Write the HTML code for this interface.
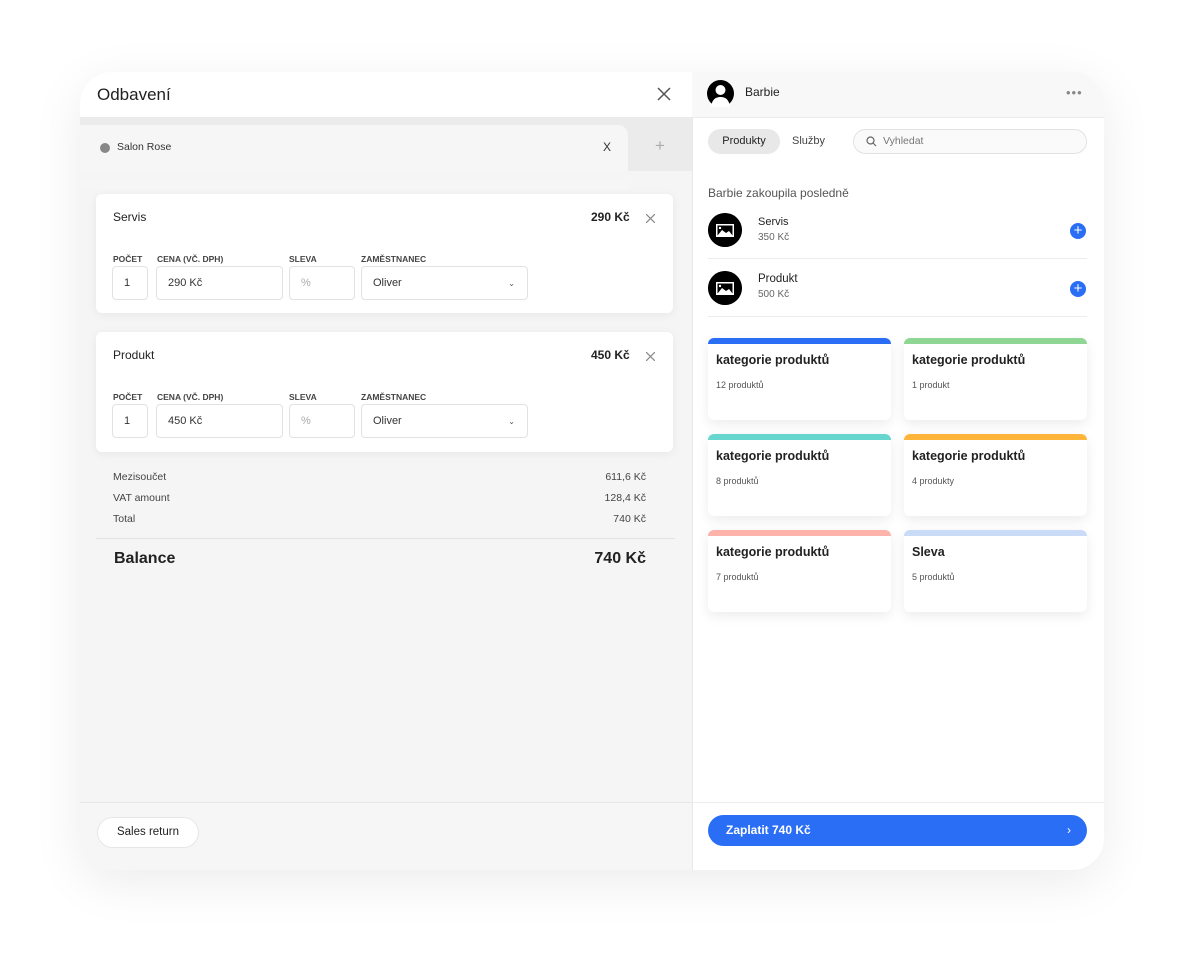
<!DOCTYPE html>
<html><head><meta charset="utf-8"><style>
*{box-sizing:border-box;margin:0;padding:0}
body{width:1184px;height:958px;background:#fff;font-family:"Liberation Sans",sans-serif;color:#222;position:relative;overflow:hidden}
.a{position:absolute}
.frame{left:80px;top:72px;width:1024px;height:798px;border-radius:32px;overflow:hidden;background:#f5f5f5;box-shadow:0 12px 50px rgba(0,0,0,.08)}
.card{background:#fff;border-radius:6px;box-shadow:0 2px 10px rgba(0,0,0,.06)}
.lbl{font-size:8.5px;font-weight:bold;color:#444}
.inp{background:#fff;border:1px solid #e2e2e2;border-radius:4px;font-size:11px;color:#333;display:flex;align-items:center;padding-left:11px}
.cat{background:#fff;border-radius:6px;box-shadow:0 4px 12px rgba(0,0,0,.08);overflow:hidden;width:183px;height:82px}
.cat .bar{height:6px}
.cat b{display:block;font-size:12.5px;margin:9px 0 0 8px;color:#222}
.cat span{display:block;font-size:9px;color:#555;margin:13px 0 0 8px}
.plus{width:16px;height:16px;border-radius:50%;background:#2a6ef5;color:#fff;font-size:15px;line-height:15px;text-align:center}
.ic{width:34px;height:34px;border-radius:50%;background:#000}
</style></head><body>
<div class="a frame">
  <div class="a" style="left:0;top:0;width:612px;height:45px;background:#fff"></div>
  <div class="a" style="left:17px;top:13px;font-size:17px;color:#222">Odbavení</div>
  <svg class="a" style="left:577px;top:15px" width="14" height="14"><path d="M1 1L13 13M13 1L1 13" stroke="#555" stroke-width="1.5"/></svg>
  <div class="a" style="left:0;top:45px;width:612px;height:54px;background:#ebebeb"></div>
  <div class="a" style="left:0;top:53px;width:548px;height:60px;background:#f6f6f6;border-radius:0 10px 0 0"></div>
  <div class="a" style="left:20px;top:71px;width:10px;height:10px;border-radius:50%;background:#888"></div>
  <div class="a" style="left:37px;top:69px;font-size:10.5px;color:#333">Salon Rose</div>
  <div class="a" style="left:523px;top:68px;font-size:12px;color:#333">X</div>
  <div class="a" style="left:575px;top:64px;font-size:17px;color:#aaa">+</div>
  <div class="a" style="left:0;top:99px;width:612px;height:631px;background:#f5f5f5"></div>
  <div class="a" style="left:0;top:108px;width:548px;height:10px;background:#f6f6f6"></div>

  <div class="a card" style="left:16px;top:122px;width:577px;height:119px"></div>
  <div class="a" style="left:33px;top:138px;font-size:12px;color:#222">Servis</div>
  <div class="a" style="left:511px;top:138px;font-size:12px;font-weight:bold">290 Kč</div>
  <svg class="a" style="left:566px;top:142px" width="9" height="9"><path d="M0 0L9 9M9 0L0 9" stroke="#888" stroke-width="1.2"/></svg>
  <div class="a lbl" style="left:33px;top:182px">POČET</div>
  <div class="a lbl" style="left:77px;top:182px">CENA (VČ. DPH)</div>
  <div class="a lbl" style="left:209px;top:182px">SLEVA</div>
  <div class="a lbl" style="left:281px;top:182px">ZAMĚSTNANEC</div>
  <div class="a inp" style="left:32px;top:194px;width:36px;height:34px">1</div>
  <div class="a inp" style="left:76px;top:194px;width:127px;height:34px">290 Kč</div>
  <div class="a inp" style="left:209px;top:194px;width:66px;height:34px;color:#aaa">%</div>
  <div class="a inp" style="left:281px;top:194px;width:167px;height:34px">Oliver<span style="position:absolute;right:12px;font-size:8px;color:#555">⌄</span></div>

  <div class="a card" style="left:16px;top:260px;width:577px;height:120px"></div>
  <div class="a" style="left:33px;top:276px;font-size:12px;color:#222">Produkt</div>
  <div class="a" style="left:511px;top:276px;font-size:12px;font-weight:bold">450 Kč</div>
  <svg class="a" style="left:566px;top:280px" width="9" height="9"><path d="M0 0L9 9M9 0L0 9" stroke="#888" stroke-width="1.2"/></svg>
  <div class="a lbl" style="left:33px;top:320px">POČET</div>
  <div class="a lbl" style="left:77px;top:320px">CENA (VČ. DPH)</div>
  <div class="a lbl" style="left:209px;top:320px">SLEVA</div>
  <div class="a lbl" style="left:281px;top:320px">ZAMĚSTNANEC</div>
  <div class="a inp" style="left:32px;top:332px;width:36px;height:34px">1</div>
  <div class="a inp" style="left:76px;top:332px;width:127px;height:34px">450 Kč</div>
  <div class="a inp" style="left:209px;top:332px;width:66px;height:34px;color:#aaa">%</div>
  <div class="a inp" style="left:281px;top:332px;width:167px;height:34px">Oliver<span style="position:absolute;right:12px;font-size:8px;color:#555">⌄</span></div>

  <div class="a" style="left:33px;top:399px;font-size:10.5px;color:#444">Mezisoučet</div>
  <div class="a" style="left:33px;top:420px;font-size:10.5px;color:#444">VAT amount</div>
  <div class="a" style="left:33px;top:441px;font-size:10.5px;color:#444">Total</div>
  <div class="a" style="left:466px;top:399px;width:100px;text-align:right;font-size:10.5px;color:#444">611,6 Kč</div>
  <div class="a" style="left:466px;top:420px;width:100px;text-align:right;font-size:10.5px;color:#444">128,4 Kč</div>
  <div class="a" style="left:466px;top:441px;width:100px;text-align:right;font-size:10.5px;color:#444">740 Kč</div>
  <div class="a" style="left:16px;top:466px;width:579px;height:1px;background:#e2e2e2"></div>
  <div class="a" style="left:34px;top:478px;font-size:16px;font-weight:bold;color:#222">Balance</div>
  <div class="a" style="left:466px;top:478px;width:100px;text-align:right;font-size:16px;font-weight:bold;color:#222">740 Kč</div>

  <div class="a" style="left:0;top:730px;width:612px;height:1px;background:#e6e6e6"></div>
  <div class="a" style="left:0;top:731px;width:612px;height:67px;background:#f6f6f6"></div>
  <div class="a" style="left:17px;top:745px;width:102px;height:31px;border-radius:16px;background:#fff;border:1px solid #e6e6e6;font-size:11.5px;line-height:29px;text-align:center;color:#222">Sales return</div>

  <div class="a" style="left:612px;top:0;width:412px;height:798px;background:#fff;border-left:1px solid #e8e8e8"></div>
  <div class="a" style="left:612px;top:0;width:412px;height:46px;background:#f8f8f8;border-bottom:1px solid #ececec"></div>
  <svg class="a" style="left:627px;top:8px" width="27" height="27"><circle cx="13.5" cy="13.5" r="13.5" fill="#000"/><circle cx="13.5" cy="10" r="5" fill="#fff"/><path d="M4 27C5 19 9 17 13.5 17S22 19 23 27Z" fill="#fff"/></svg>
  <div class="a" style="left:665px;top:13px;font-size:12px;color:#222">Barbie</div>
  <div class="a" style="left:986px;top:13px;font-size:13px;color:#888;letter-spacing:1px">•••</div>

  <div class="a" style="left:628px;top:57px;width:72px;height:25px;border-radius:13px;background:#e8e8e8;font-size:11px;line-height:25px;text-align:center;color:#222">Produkty</div>
  <div class="a" style="left:712px;top:63px;font-size:11px;color:#444">Služby</div>
  <div class="a" style="left:773px;top:57px;width:234px;height:25px;border-radius:13px;border:1px solid #e2e2e2;background:#fafafa"></div>
  <svg class="a" style="left:786px;top:64px" width="11" height="11"><circle cx="4.5" cy="4.5" r="3.5" stroke="#666" fill="none" stroke-width="1.2"/><path d="M7 7L10 10" stroke="#666" stroke-width="1.2"/></svg>
  <div class="a" style="left:803px;top:63px;font-size:10.5px;color:#777">Vyhledat</div>

  <div class="a" style="left:628px;top:114px;font-size:12px;color:#555">Barbie zakoupila posledně</div>
  <svg class="a ic" style="left:628px;top:141px" width="34" height="34" viewBox="0 0 34 34"><circle cx="17" cy="17" r="17"/><rect x="8" y="11" width="18" height="13" fill="#fff"/><rect x="9.5" y="12.5" width="15" height="10" fill="#000"/><path d="M9.5 22.5L14 17L18 20L21 18L24.5 22.5Z" fill="#fff"/><circle cx="12" cy="15" r="1.2" fill="#fff"/></svg>
  <div class="a" style="left:678px;top:144px;font-size:11px;color:#222">Servis</div>
  <div class="a" style="left:678px;top:160px;font-size:10px;color:#666">350 Kč</div>
  <div class="a plus" style="left:990px;top:151px">+</div>
  <div class="a" style="left:628px;top:186px;width:379px;height:1px;background:#ececec"></div>
  <svg class="a ic" style="left:628px;top:199px" width="34" height="34" viewBox="0 0 34 34"><circle cx="17" cy="17" r="17"/><rect x="8" y="11" width="18" height="13" fill="#fff"/><rect x="9.5" y="12.5" width="15" height="10" fill="#000"/><path d="M9.5 22.5L14 17L18 20L21 18L24.5 22.5Z" fill="#fff"/><circle cx="12" cy="15" r="1.2" fill="#fff"/></svg>
  <div class="a" style="left:678px;top:201px;font-size:11.5px;color:#222">Produkt</div>
  <div class="a" style="left:678px;top:217px;font-size:10px;color:#666">500 Kč</div>
  <div class="a plus" style="left:990px;top:209px">+</div>
  <div class="a" style="left:628px;top:244px;width:379px;height:1px;background:#ececec"></div>

  <div class="a cat" style="left:628px;top:266px"><div class="bar" style="background:#2a6ef5"></div><b>kategorie produktů</b><span>12 produktů</span></div>
  <div class="a cat" style="left:824px;top:266px"><div class="bar" style="background:#8fd694"></div><b>kategorie produktů</b><span>1 produkt</span></div>
  <div class="a cat" style="left:628px;top:362px"><div class="bar" style="background:#66d6cf"></div><b>kategorie produktů</b><span>8 produktů</span></div>
  <div class="a cat" style="left:824px;top:362px"><div class="bar" style="background:#ffb53a"></div><b>kategorie produktů</b><span>4 produkty</span></div>
  <div class="a cat" style="left:628px;top:458px"><div class="bar" style="background:#fdb3a9"></div><b>kategorie produktů</b><span>7 produktů</span></div>
  <div class="a cat" style="left:824px;top:458px"><div class="bar" style="background:#c9dbf7"></div><b>Sleva</b><span>5 produktů</span></div>

  <div class="a" style="left:612px;top:730px;width:412px;height:1px;background:#ececec"></div>
  <div class="a" style="left:628px;top:743px;width:379px;height:31px;border-radius:16px;background:#2a6ef5;color:#fff;font-size:12px;font-weight:bold;line-height:31px;padding-left:18px">Zaplatit 740 Kč<span style="position:absolute;right:16px;font-weight:normal">›</span></div>
</div>
</body></html>
